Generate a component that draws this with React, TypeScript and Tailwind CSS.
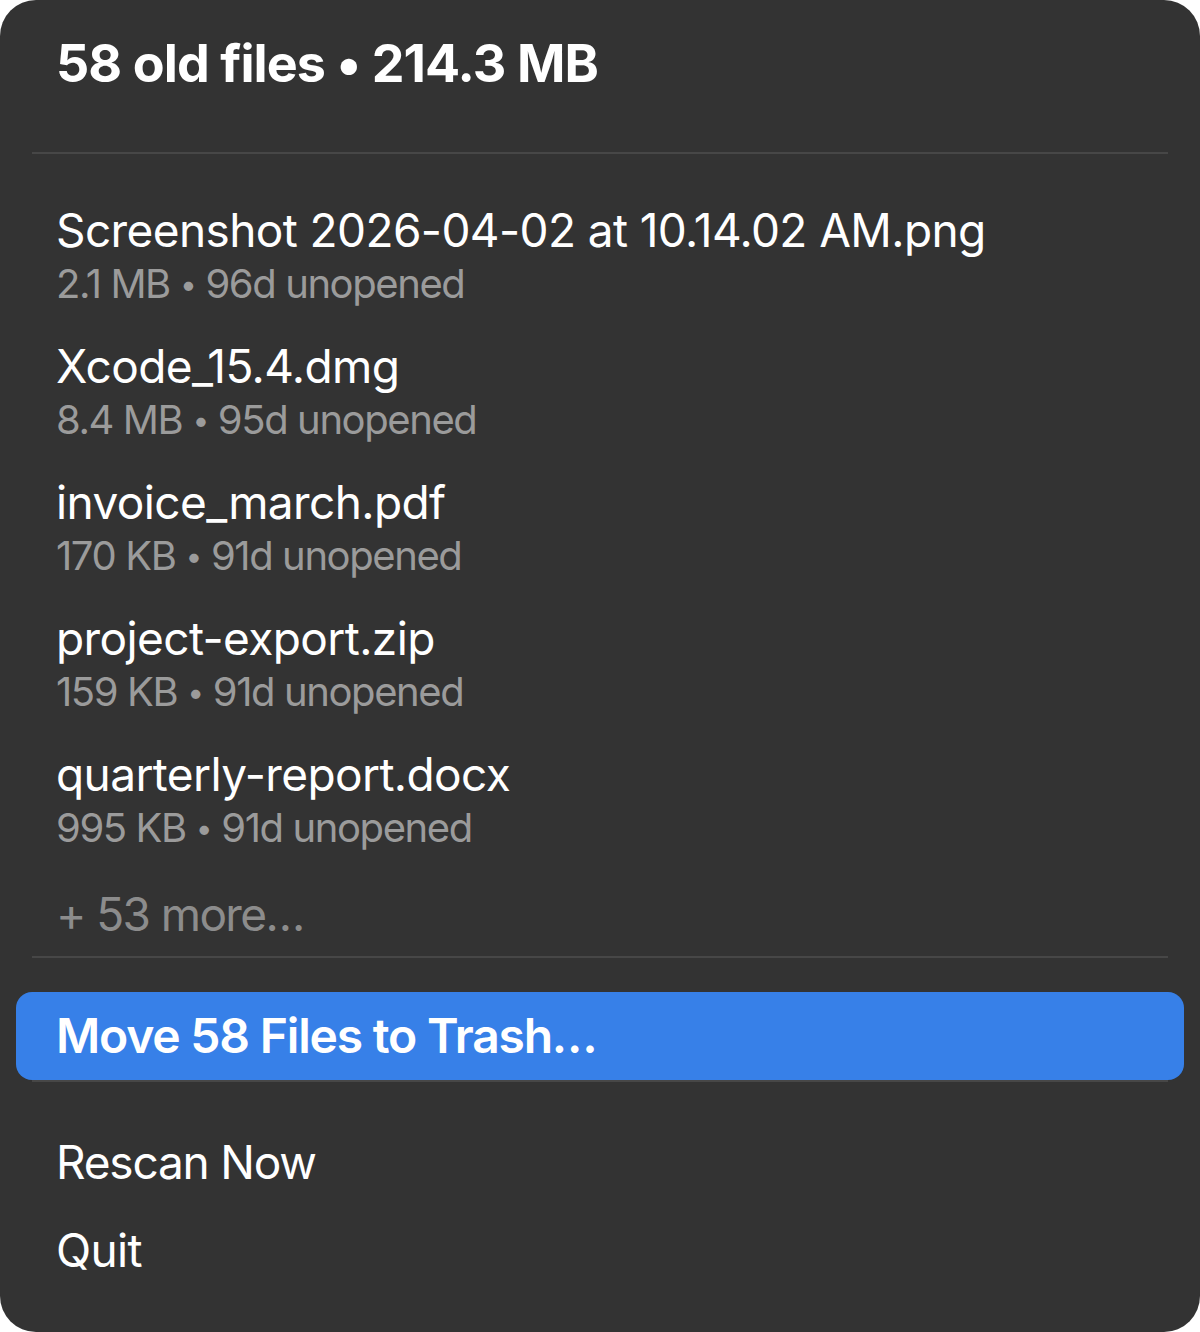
const files = [
  { name: "Screenshot 2026-04-02 at 10.14.02 AM.png", size: "2.1 MB", age: "96d unopened" },
  { name: "Xcode_15.4.dmg", size: "8.4 MB", age: "95d unopened" },
  { name: "invoice_march.pdf", size: "170 KB", age: "91d unopened" },
  { name: "project-export.zip", size: "159 KB", age: "91d unopened" },
  { name: "quarterly-report.docx", size: "995 KB", age: "91d unopened" },
];

export default function App() {
  return (
    <div className="h-[1332px] w-[1200px] bg-white font-['Inter',sans-serif]">
      <div className="flex h-full flex-col rounded-[36px] bg-[#333333]">
        <div className="flex h-[128px] items-center px-[56px] text-[52px] font-bold leading-none tracking-[-0.9px] text-white">
          58 old files • 214.3 MB
        </div>
        <div className="mx-[32px] mt-[24px] h-[2px] bg-[#474747]" />

        <div className="flex flex-col pt-[48px]">
          {files.map((f) => (
            <div key={f.name} className="flex flex-col px-[56px] pb-[28px]">
              <div className="flex h-[56px] items-center text-[46px] leading-none tracking-[-0.6px] text-white">
                {f.name}
              </div>
              <div className="flex h-[52px] items-center text-[40px] leading-none tracking-[-1.4px] text-[#9b9b9b]">
                {f.size} <span className="px-[10px] text-[30px]">•</span> {f.age}
              </div>
            </div>
          ))}
          <div className="flex h-[64px] items-center px-[56px] text-[46px] leading-none tracking-[-1.6px] text-[#8c8c8c]">
            + 53 more…
          </div>
        </div>
        <div className="mx-[32px] mt-[10px] h-[2px] bg-[#474747]" />

        <div className="mx-[16px] mt-[34px] flex h-[88px] items-center rounded-[16px] bg-[#3780e8] px-[40px] text-[48px] font-semibold leading-none tracking-[-1.2px] text-white">
          Move 58 Files to Trash…
        </div>
        <div className="mx-[32px] h-[2px] bg-[#474747]" />

        <div className="mt-[36px] flex flex-col">
          <div className="flex h-[88px] items-center px-[56px] text-[46px] leading-none tracking-[-1.2px] text-white">
            Rescan Now
          </div>
          <div className="flex h-[88px] items-center px-[56px] text-[46px] leading-none tracking-[-0.7px] text-white">
            Quit
          </div>
        </div>
      </div>
    </div>
  );
}
